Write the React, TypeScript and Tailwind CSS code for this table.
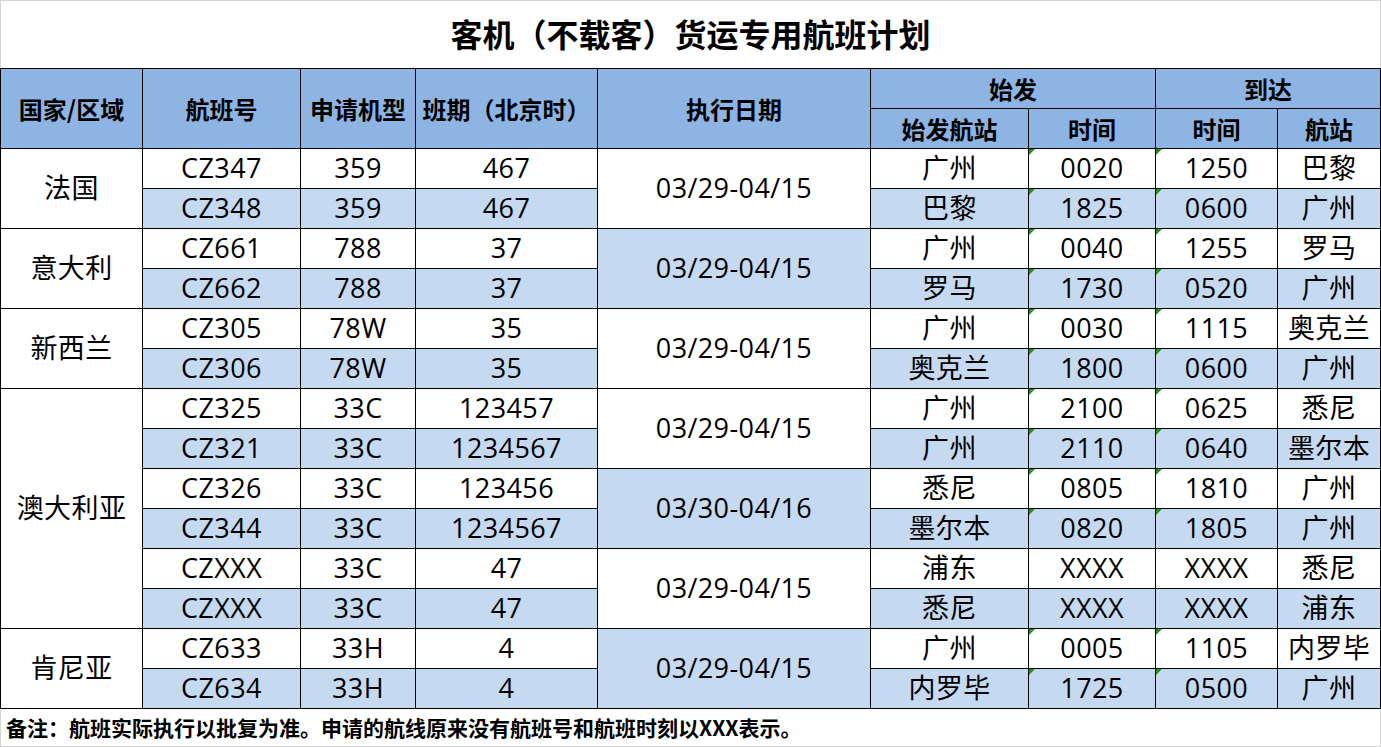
import React from "react";

type Row = [string, string, string, string, string, string, string];
type Group = { country: string; rows: Row[]; dates: { text: string; blue: boolean }[] };

const groups: Group[] = [
  {
    country: "法国",
    rows: [
      ["CZ347", "359", "467", "广州", "0020", "1250", "巴黎"],
      ["CZ348", "359", "467", "巴黎", "1825", "0600", "广州"],
    ],
    dates: [{ text: "03/29-04/15", blue: false }],
  },
  {
    country: "意大利",
    rows: [
      ["CZ661", "788", "37", "广州", "0040", "1255", "罗马"],
      ["CZ662", "788", "37", "罗马", "1730", "0520", "广州"],
    ],
    dates: [{ text: "03/29-04/15", blue: true }],
  },
  {
    country: "新西兰",
    rows: [
      ["CZ305", "78W", "35", "广州", "0030", "1115", "奥克兰"],
      ["CZ306", "78W", "35", "奥克兰", "1800", "0600", "广州"],
    ],
    dates: [{ text: "03/29-04/15", blue: false }],
  },
  {
    country: "澳大利亚",
    rows: [
      ["CZ325", "33C", "123457", "广州", "2100", "0625", "悉尼"],
      ["CZ321", "33C", "1234567", "广州", "2110", "0640", "墨尔本"],
      ["CZ326", "33C", "123456", "悉尼", "0805", "1810", "广州"],
      ["CZ344", "33C", "1234567", "墨尔本", "0820", "1805", "广州"],
      ["CZXXX", "33C", "47", "浦东", "XXXX", "XXXX", "悉尼"],
      ["CZXXX", "33C", "47", "悉尼", "XXXX", "XXXX", "浦东"],
    ],
    dates: [
      { text: "03/29-04/15", blue: false },
      { text: "03/30-04/16", blue: true },
      { text: "03/29-04/15", blue: false },
    ],
  },
  {
    country: "肯尼亚",
    rows: [
      ["CZ633", "33H", "4", "广州", "0005", "1105", "内罗毕"],
      ["CZ634", "33H", "4", "内罗毕", "1725", "0500", "广州"],
    ],
    dates: [{ text: "03/29-04/15", blue: true }],
  },
];

const cellBase =
  "relative flex items-center justify-center pb-[2px] leading-none text-[27px] tracking-[0.4px] text-black";

function Cell({ text, blue, tri }: { text: string; blue: boolean; tri?: boolean }) {
  return (
    <div className={`${cellBase} ${blue ? "bg-[#c5d9f1]" : "bg-white"}`}>
      {tri && (
        <span className="absolute top-0 left-0 w-0 h-0 border-t-[6px] border-r-[6px] border-t-[#1f8f1f] border-r-transparent" />
      )}
      {text}
    </div>
  );
}

const headCls =
  "flex items-center justify-center bg-[#8db4e2] text-[24px] font-bold leading-none text-black font-['Noto_Sans_CJK_SC',sans-serif]";

const isNum = (s: string) => /^\d+$/.test(s);

export default function App() {
  return (
    <div className="w-[1381px] h-[747px] bg-white flex flex-col overflow-hidden font-['Open_Sans','Noto_Sans_CJK_SC',sans-serif]">
      <div className="h-[68px] shrink-0 border-t border-l border-r border-[#d4d4d4] flex items-center justify-center pb-[3px] text-[32px] font-bold text-black font-['Noto_Sans_CJK_SC',sans-serif]">
        客机（不载客）货运专用航班计划
      </div>
      <div className="grid shrink-0 bg-black p-px gap-px grid-cols-[141px_157px_114px_181px_272px_157px_126px_121px_102px] auto-rows-[39px]">
        <div className={`${headCls} row-span-2`}>国家/区域</div>
        <div className={`${headCls} row-span-2`}>航班号</div>
        <div className={`${headCls} row-span-2`}>申请机型</div>
        <div className={`${headCls} row-span-2`}>班期（北京时）</div>
        <div className={`${headCls} row-span-2`}>执行日期</div>
        <div className={`${headCls} col-span-2`}>始发</div>
        <div className={`${headCls} col-span-2`}>到达</div>
        <div className={headCls}>始发航站</div>
        <div className={headCls}>时间</div>
        <div className={headCls}>时间</div>
        <div className={headCls}>航站</div>

        {groups.map((g) => (
          <React.Fragment key={g.country}>
            <div
              className={`${cellBase} bg-white ${g.rows.length === 6 ? "row-span-6" : "row-span-2"}`}
            >
              {g.country}
            </div>
            {g.rows.map((r, i) => {
              const blue = i % 2 === 1;
              const d = g.dates[Math.floor(i / 2)];
              return (
                <React.Fragment key={i}>
                  <Cell text={r[0]} blue={blue} />
                  <Cell text={r[1]} blue={blue} />
                  <Cell text={r[2]} blue={blue} />
                  {i % 2 === 0 && (
                    <div
                      className={`${cellBase} row-span-2 ${d.blue ? "bg-[#c5d9f1]" : "bg-white"}`}
                    >
                      {d.text}
                    </div>
                  )}
                  <Cell text={r[3]} blue={blue} />
                  <Cell text={r[4]} blue={blue} tri={isNum(r[4])} />
                  <Cell text={r[5]} blue={blue} tri={isNum(r[5])} />
                  <Cell text={r[6]} blue={blue} />
                </React.Fragment>
              );
            })}
          </React.Fragment>
        ))}
      </div>
      <div className="h-[38px] shrink-0 border-l border-r border-b border-[#d4d4d4] flex items-center pl-[5px] pb-[1px] text-[21px] font-bold text-black leading-none font-['Noto_Sans_CJK_SC',sans-serif]">
        备注：航班实际执行以批复为准。申请的航线原来没有航班号和航班时刻以XXX表示。
      </div>
    </div>
  );
}
